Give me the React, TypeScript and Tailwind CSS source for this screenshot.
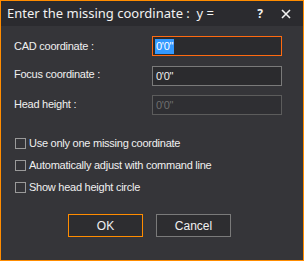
import React from "react";

const fnt = "font-['Liberation_Sans',Arial,sans-serif] text-[11px] tracking-[-0.25px]";
const lbl = `${fnt} text-[#f0f0f0]`;

function Check({ label, top }: { label: string; top: string }) {
  return (
    <div className={`flex items-center ${top}`}>
      <div className="w-[11px] h-[11px] border border-[#9a9a9a] bg-[#343438] ml-[14px]" />
      <span className={`${lbl} ml-[3px] leading-[14px]`}>{label}</span>
    </div>
  );
}

export default function App() {
  return (
    <div className="w-[304px] h-[261px] border border-[#ff8c00] bg-[#353539] flex flex-col overflow-hidden">
      <div className="h-[25px] bg-[#2b2b2f] flex items-center justify-between font-['Noto_Sans',sans-serif] text-[13px] text-[#f2f2f2] shrink-0">
        <span className="ml-[6px] leading-none">Enter the missing coordinate :&nbsp; y =</span>
        <div className="flex items-center">
          <span className="font-bold text-[12px] mr-[18px]">?</span>
          <svg width="10" height="10" viewBox="0 0 10 10" className="mr-[12px]">
            <path d="M1 1 L9 9 M9 1 L1 9" stroke="#f2f2f2" strokeWidth="1.6" />
          </svg>
        </div>
      </div>
      <div className="flex flex-col">
        <div className="flex items-center mt-[10px]">
          <span className={`${lbl} w-[151px] shrink-0 pl-[13px]`}>CAD coordinate :</span>
          <div className="w-[130px] h-[20px] border border-[#ff6a10] bg-[#2b2b2e] flex items-center pl-[2px]">
            <span className={`${fnt} text-white bg-[#3399ff] leading-[15px] px-[1px]`}>0'0"</span>
          </div>
        </div>
        <div className="flex items-center mt-[10px]">
          <span className={`${lbl} w-[151px] shrink-0 pl-[13px] -mt-[4px]`}>Focus coordinate :</span>
          <div className="w-[130px] h-[20px] border border-[#7a7a7a] bg-[#2b2b2e] flex items-center pl-[3px]">
            <span className={lbl}>0'0"</span>
          </div>
        </div>
        <div className="flex items-center mt-[9px]">
          <span className={`${lbl} w-[151px] shrink-0 pl-[13px] -mt-[2px]`}>Head height :</span>
          <div className="w-[130px] h-[20px] border border-[#5c5c5c] bg-[#2f2f33] flex items-center pl-[3px]">
            <span className={`${fnt} text-[#6e6e6e]`}>0'0"</span>
          </div>
        </div>
        <Check label="Use only one missing coordinate" top="mt-[21px]" />
        <Check label="Automatically adjust with command line" top="mt-[8px]" />
        <Check label="Show head height circle" top="mt-[8px]" />
        <div className="flex mt-[20px] ml-[67px] gap-[13px]">
          <div className={`w-[75px] h-[23px] border border-[#ff8c00] bg-[#2d2d30] flex items-center justify-center font-['Liberation_Sans',Arial,sans-serif] text-[12px] text-[#f0f0f0]`}>OK</div>
          <div className={`w-[75px] h-[23px] border border-[#7a7a7a] bg-[#2d2d30] flex items-center justify-center font-['Liberation_Sans',Arial,sans-serif] text-[12px] text-[#f0f0f0]`}>Cancel</div>
        </div>
      </div>
    </div>
  );
}
